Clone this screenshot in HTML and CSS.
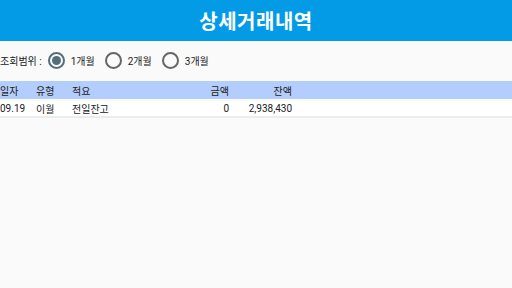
FILE: index.html
```html
<!DOCTYPE html>
<html lang="ko">
<head>
<meta charset="utf-8">
<link rel="stylesheet" href="styles.css">
</head>
<body>
<header class="appbar"><h1 class="title">상세거래내역</h1></header>
<div class="filter">
  <span class="label">조회범위 :</span>
  <label class="opt"><span class="radio checked"></span>1개월</label>
  <label class="opt"><span class="radio"></span>2개월</label>
  <label class="opt"><span class="radio"></span>3개월</label>
</div>
<div class="grid head">
  <span>일자</span><span>유형</span><span>적요</span><span class="r">금액</span><span class="r">잔액</span>
</div>
<div class="grid row">
  <span>09.19</span><span>이월</span><span>전일잔고</span><span class="r">0</span><span class="r">2,938,430</span>
</div>
</body>
</html>
```
FILE: styles.css
```css
html, body { margin: 0; padding: 0; }
body {
  width: 512px; height: 288px; overflow: hidden;
  background: #fafafa;
  font-family: Roboto, "Noto Sans CJK KR", sans-serif;
  color: #212121;
  font-size: 10px;
}
.appbar {
  height: 41px; background: #039be5;
  display: flex; align-items: center; justify-content: center;
}
.title {
  margin: 0; color: #fff; font-size: 20px; font-weight: 700;
  font-family: "Noto Sans CJK KR", sans-serif;
  letter-spacing: 0.5px;
}
.filter {
  height: 38px; display: flex; align-items: center;
  padding-bottom: 1px;
}
.label { margin-right: 6px; }
.opt { display: flex; align-items: center; margin-right: 10px; }
.radio {
  width: 13px; height: 13px; border-radius: 50%;
  border: 2px solid #666; margin-right: 6px;
  display: flex; align-items: center; justify-content: center;
}
.radio.checked { border-color: #546e7a; }
.radio.checked::after {
  content: ""; width: 9px; height: 9px; border-radius: 50%; background: #546e7a;
}
.grid {
  display: grid;
  grid-template-columns: 36px 36px 100px 57px 63px 1fr;
  align-items: center;
}
.head { height: 18px; background: #b3cdfc; margin-top: 1px; }
.row { height: 15px; background: #fff; margin-top: 2px; border-bottom: 2px solid #ececec; }
.r { text-align: right; }
```
